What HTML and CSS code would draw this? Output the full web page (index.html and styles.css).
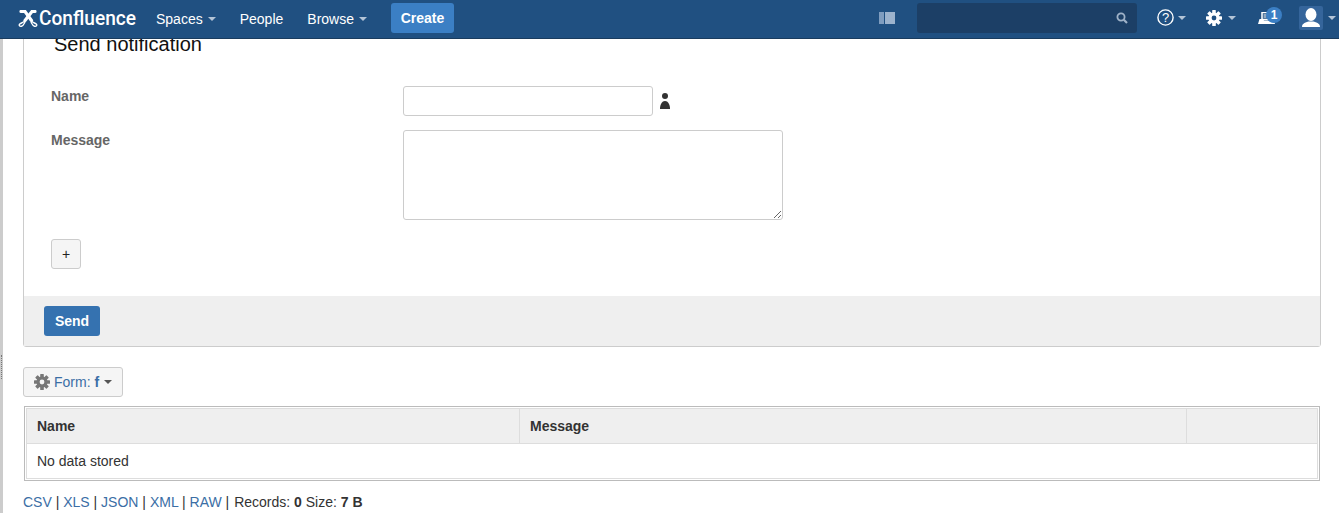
FILE: index.html
```html
<!DOCTYPE html>
<html lang="en">
<head>
<meta charset="utf-8">
<title>Send notification - Confluence</title>
<link rel="stylesheet" href="styles.css">
</head>
<body>
<header class="topbar">
  <a class="logo">
    <svg class="logo-mark" viewBox="0 0 20 18" width="20" height="18"><g fill="none" stroke="#fff" stroke-linecap="round"><path d="M3 1.500L7 1.500L13.500 10.500" stroke-width="3.200"/><path d="M17 1.500L14 1.500L7 10.500" stroke-width="3.200"/><path d="M7.500 10C6 12.500 3.500 12.800 2 13.800C.5 15 1.500 16.800 3.500 16.300C5 16 6 14 6.800 12.500" stroke-width="1.400"/><path d="M12.500 10C14 12.500 16.500 12.800 18 13.800C19.500 15 18.500 16.800 16.500 16.300C15 16 14 14 13.200 12.500" stroke-width="1.400"/></g></svg>
    <span class="logo-text">Confluence</span>
  </a>
  <nav class="nav">
    <a class="nav-item">Spaces<i class="caret"></i></a>
    <a class="nav-item">People</a>
    <a class="nav-item">Browse<i class="caret"></i></a>
  </nav>
  <a class="create">Create</a>
  <div class="spacer"></div>
  <svg class="sidebar-icon" viewBox="0 0 16 12" width="16" height="12"><rect width="5" height="12" fill="#7f9dbf"/><rect x="6" width="10" height="12" fill="#9cb3cd"/></svg>
  <div class="search">
    <svg viewBox="0 0 12 12" width="12" height="12"><circle cx="5" cy="5" r="3.600" fill="none" stroke="#9fb2c8" stroke-width="1.800"/><path d="M7.800 7.800L11 11" stroke="#9fb2c8" stroke-width="2.200"/></svg>
  </div>
  <a class="tool help">
    <svg viewBox="0 0 17 17" width="17" height="17"><circle cx="8.500" cy="8.500" r="7.600" fill="none" stroke="#fff" stroke-width="1.400"/><text x="8.500" y="13" text-anchor="middle" class="help-mark">?</text></svg>
    <i class="caret"></i>
  </a>
  <a class="tool gear">
    <svg viewBox="0 0 16 16" width="16" height="16"><g fill="#fff"><circle cx="8" cy="8" r="5.500"/><rect x="6.200" y="0" width="3.600" height="16" rx=".6"/><rect x="6.200" y="0" width="3.600" height="16" rx=".6" transform="rotate(45 8 8)"/><rect x="6.200" y="0" width="3.600" height="16" rx=".6" transform="rotate(90 8 8)"/><rect x="6.200" y="0" width="3.600" height="16" rx=".6" transform="rotate(135 8 8)"/></g><circle cx="8" cy="8" r="2.400" fill="#205081"/></svg>
    <i class="caret"></i>
  </a>
  <a class="tool notes">
    <svg viewBox="0 0 18 12" width="18" height="12"><path d="M4 0.500h9v7H4z" fill="none" stroke="#fff" stroke-width="1.500"/><path d="M5.500 3h5M5.500 5h3" stroke="#fff" stroke-width="1"/><path d="M1.500 7h3.500l1 1.500h5l1-1.500h3.500l1.500 5H0z" fill="#fff"/></svg>
    <span class="badge">1</span>
  </a>
  <a class="tool profile">
    <span class="avatar"><svg viewBox="0 0 24 24" width="24" height="24"><ellipse cx="12" cy="8.500" rx="5.500" ry="6.500" fill="#fff"/><path d="M3 21c0-3 2-4 6.500-5.500h5C19 17 21 18 21 21z" fill="#fff"/></svg></span>
    <i class="caret"></i>
  </a>
</header>

<div class="page">
  <div class="rail"><span class="grip"></span></div>
  <main class="content">
    <section class="card">
      <div class="card-body">
        <h2 class="card-title">Send notification</h2>
        <div class="field">
          <label class="field-label">Name</label>
          <input class="input" type="text">
          <svg class="person" viewBox="0 0 10 16" width="10" height="16"><circle cx="5" cy="3" r="3" fill="#333"/><path d="M0 16c0-1 0-3 1-5 1-2 2-3 4-3s3 1 4 3c1 2 1 4 1 5z" fill="#333"/></svg>
        </div>
        <div class="field field-area">
          <label class="field-label">Message</label>
          <textarea class="textarea"></textarea>
        </div>
        <button class="add" type="button">+</button>
      </div>
      <div class="card-foot"><button class="send" type="button">Send</button></div>
    </section>

    <button class="form-menu" type="button">
      <svg viewBox="0 0 16 16" width="16" height="16"><g fill="#777"><circle cx="8" cy="8" r="5.500"/><rect x="6.200" y="0" width="3.600" height="16" rx=".6"/><rect x="6.200" y="0" width="3.600" height="16" rx=".6" transform="rotate(45 8 8)"/><rect x="6.200" y="0" width="3.600" height="16" rx=".6" transform="rotate(90 8 8)"/><rect x="6.200" y="0" width="3.600" height="16" rx=".6" transform="rotate(135 8 8)"/></g><circle cx="8" cy="8" r="2.400" fill="#f5f5f5"/></svg>
      <span class="form-label">Form: <b>f</b></span>
      <i class="caret caret-dark"></i>
    </button>

    <div class="table-wrap">
      <table class="data">
        <thead>
          <tr><th class="col-name">Name</th><th class="col-msg">Message</th><th></th></tr>
        </thead>
        <tbody>
          <tr><td colspan="3">No data stored</td></tr>
        </tbody>
      </table>
    </div>

    <p class="exports">
      <a>CSV</a> | <a>XLS</a> | <a>JSON</a> | <a>XML</a> | <a>RAW</a> | <span class="stats">Records: <b>0</b> Size: <b>7 B</b></span>
    </p>
  </main>
</div>
</body>
</html>
```
FILE: styles.css
```css
* { box-sizing: border-box; }
html, body { margin: 0; height: 513px; overflow: hidden; background: #fff; }
body { font-family: "Liberation Sans", Arial, sans-serif; font-size: 14px; color: #333; }

.topbar {
  position: absolute; top: 0; left: 0; right: 0; z-index: 5;
  height: 39px;
  display: flex; align-items: center;
  background: #205081;
  border-bottom: 1px solid #1a3c5e;
  color: #fff;
  padding-left: 18px;
}
.logo { display: flex; align-items: center; width: 138px; flex: none; }
.logo-mark { flex: none; margin-top: -1px; }
.logo-text {
  font-family: Roboto, "Liberation Sans", sans-serif;
  font-size: 21px; font-weight: 500; margin-left: 1px; margin-top: -3px; color: #fff;
  display: inline-block; transform: scaleX(.91); transform-origin: left center;
}
.nav { display: flex; }
.nav-item { display: flex; align-items: center; padding-right: 24px; margin-top: -1px; color: #fff; }
.caret {
  display: inline-block; width: 0; height: 0; margin-left: 5px;
  border-left: 4px solid transparent; border-right: 4px solid transparent;
  border-top: 4px solid #b3c4d7;
}
.caret-dark { border-top-color: #555; margin-left: 5px; }
.create {
  height: 30px; width: 63px; flex: none;
  display: flex; align-items: center; justify-content: center;
  background: #3b7fc4; border-radius: 3px; font-weight: 700; font-size: 14px; margin-top: -3px; color: #fff;
}
.spacer { flex: 1; }
.sidebar-icon { flex: none; margin-right: 22px; margin-top: -2px; }
.search {
  width: 220px; height: 30px; flex: none; margin-top: -3px; margin-right: 20px;
  background: #1c3f66; border-radius: 3px;
  display: flex; align-items: center; justify-content: flex-end; padding-right: 9px;
}
.tool { display: flex; align-items: center; flex: none; position: relative; margin-top: -3px; }
.help { width: 49px; }
.help-mark { font-family: "Liberation Sans", sans-serif; font-size: 13px; fill: #fff; }
.gear { width: 52px; }
.help .caret { margin-left: 4px; }
.gear .caret { margin-left: 6px; }
.notes { width: 41px; }
.badge {
  position: absolute; left: 8px; top: -5px;
  width: 16px; height: 16px; border-radius: 50%;
  background: #3b7fc4; color: #fff; font-size: 12px; font-weight: 700; line-height: 16px; text-align: center;
}
.profile { width: 40px; }
.avatar { width: 24px; height: 24px; background: #35659b; border-radius: 2px; display: block; flex: none; }
.profile .caret { margin-left: 5px; }

.page { display: flex; height: 513px; }
.rail { width: 3px; flex: none; background: #ccc; position: relative; }
.grip {
  position: absolute; left: 1px; top: 355px; height: 24px;
  border-left: 1px dotted #777;
}
.content { flex: 1; padding: 0 18px 0 20px; }

.card {
  margin-top: 14px;
  height: 333px;
  width: 1298px;
  border: 1px solid #ccc; border-radius: 3px;
  display: flex; flex-direction: column;
}
.card-body { flex: 1; padding: 17px 27px 0 27px; }
.card-title { margin: 0 0 0 3px; font-size: 20px; font-weight: 400; line-height: 24px; color: #111; }
.field { display: flex; align-items: flex-start; margin-top: 30px; }
.field-area { margin-top: 14px; }
.field-label { width: 352px; flex: none; font-weight: 700; color: #666; line-height: 18px; margin-top: 1px; }
.input {
  width: 250px; height: 30px; border: 1px solid #ccc; border-radius: 3px; padding: 0; background: #fff;
  font: inherit;
}
.person { margin: 7px 0 0 7px; flex: none; }
.textarea {
  width: 380px; height: 90px; border: 1px solid #ccc; border-radius: 3px; padding: 0; margin: 0;
  display: block; font: inherit; background: #fff;
}
.add {
  display: block; margin-top: 19px; width: 30px; height: 30px; padding: 0;
  background: #f5f5f5; border: 1px solid #ccc; border-radius: 3px; font: inherit; color: #222; font-size: 14px;
}
.card-foot { height: 50px; background: #efefef; padding: 10px 20px 0; }
.send {
  width: 56px; height: 30px; padding: 0; border: 0; border-radius: 3px;
  background: #3572b0; color: #fff; font-family: inherit; font-size: 14px; font-weight: 700;
}

.form-menu {
  display: flex; align-items: center;
  margin: 20px 0 0; height: 30px; width: 100px; padding: 0 0 0 10px;
  background: #f5f5f5; border: 1px solid #ccc; border-radius: 3px; font: inherit;
}
.form-label { margin-left: 4px; color: #3b6ea5; }
.form-label b { color: #3b6ea5; }

.table-wrap {
  margin: 9px 0 0 1px; width: 1296px; height: 75px;
  border: 1px solid #bbb; padding: 1px;
}
.data { width: 100%; height: 100%; border-collapse: collapse; border: 1px solid #ddd; table-layout: fixed; }
.data th {
  background: #efefef; border-bottom: 1px solid #ddd; border-left: 1px solid #ddd;
  height: 35px; padding: 0 10px; text-align: left; font-weight: 700; color: #333;
}
.data th:first-child { border-left: 0; }
.col-name { width: 493px; }
.col-msg { width: 667px; }
.data td { padding: 0 10px; color: #333; }

.exports { margin: 12px 0 0; line-height: 18px; color: #333; }
.exports a { color: #3b6ea5; }
.stats { margin-left: 1px; }
```
